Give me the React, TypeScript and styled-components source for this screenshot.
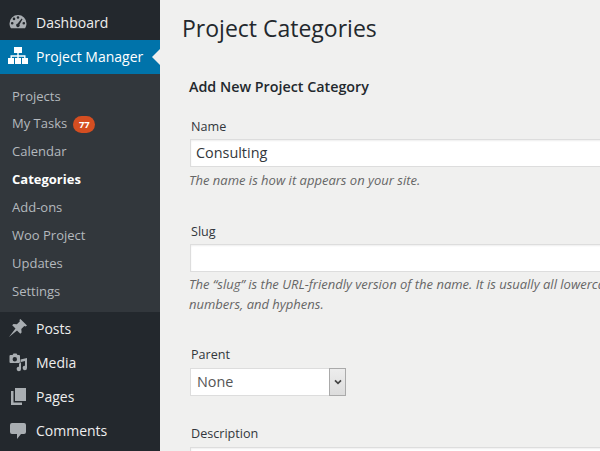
import styled, { createGlobalStyle } from 'styled-components'

const GlobalStyle = createGlobalStyle`
	html, body {
		margin: 0;
		width: 600px;
		height: 451px;
		overflow: hidden;
		background: #f0f0ef;
		font-family: 'Open Sans', sans-serif;
	}
	* {
		box-sizing: border-box;
	}
`

const Page = styled.div`
	width: 600px;
	height: 451px;
	display: flex;
	overflow: hidden;
`

const Sidebar = styled.nav`
	width: 160px;
	flex-shrink: 0;
	padding-top: 6px;
	background: #23282d;
`

const MenuRow = styled.div<{ $active?: boolean }>`
	height: 34px;
	display: flex;
	position: relative;
	align-items: center;
	gap: 8px;
	padding: 0 0 2px 8px;
	font-size: 14px;
	color: ${(p) => (p.$active ? '#fff' : '#eee')};
	background: ${(p) => (p.$active ? '#0073aa' : 'transparent')};
`

const IconSlot = styled.span`
	width: 20px;
	height: 20px;
	display: flex;
	flex-shrink: 0;
	color: #a9aeb2;
`

const ActiveArrow = styled.span`
	position: absolute;
	top: 9px;
	right: 0;
	border: 8px solid transparent;
	border-right-color: #f0f0ef;
	border-left-width: 0;
`

const Submenu = styled.div`
	height: 238px;
	padding-top: 7.6px;
	background: #32373c;
`

const SubItem = styled.div<{ $current?: boolean }>`
	height: 27.86px;
	display: flex;
	align-items: center;
	gap: 6px;
	padding-left: 12px;
	font-size: 13px;
	color: ${(p) => (p.$current ? '#fff' : '#b4b9be')};
	font-weight: ${(p) => (p.$current ? 700 : 400)};
`

const Badge = styled.span`
	width: 22px;
	height: 17px;
	display: flex;
	align-items: center;
	justify-content: center;
	border-radius: 9px;
	margin-top: 3px;
	font-size: 9.5px;
	font-weight: 700;
	letter-spacing: -0.3px;
	color: #fff;
	background: #d54e21;
`

const Content = styled.main`
	width: 440px;
	flex-shrink: 0;
	padding: 12px 0 0 22px;
	color: #23282d;
`

const Title = styled.h1`
	margin: 0 0 32px;
	font-size: 23px;
	line-height: 33px;
	font-weight: 400;
`

const Form = styled.div`
	padding-left: 7px;
`

const Heading = styled.h2`
	margin: 0 0 21px;
	font-size: 14.3px;
	line-height: 20px;
	font-weight: 600;
`

const Field = styled.div<{ $gap: number }>`
	width: 440px;
	margin-bottom: ${(p) => p.$gap}px;
`

const Label = styled.div<{ $gap?: number }>`
	margin: 0 0 ${(p) => p.$gap ?? 4}px 2px;
	font-size: 12.6px;
	line-height: 17px;
	color: #32373c;
`

const TextInput = styled.div`
	height: 28px;
	width: 440px;
	margin-left: 1px;
	padding-left: 5px;
	font-size: 14.4px;
	line-height: 25px;
	color: #32373c;
	background: #fff;
	border: 1px solid #ddd;
	box-shadow: inset 0 1px 2px rgba(0, 0, 0, 0.07);
`

const Hint = styled.p`
	margin: 2.5px 0 0;
	width: 411px;
	font-size: 13px;
	line-height: 20px;
	font-style: italic;
	white-space: nowrap;
	color: #666;
`

const SelectBox = styled.div`
	width: 156px;
	height: 28px;
	display: flex;
	margin-left: 1px;
	background: #fff;
	border: 1px solid #ddd;
`

const SelectValue = styled.div`
	flex: 1;
	padding-left: 6px;
	font-size: 14.4px;
	line-height: 26px;
	color: #555;
`

const SelectButton = styled.div`
	width: 17px;
	display: flex;
	align-items: center;
	justify-content: center;
	color: #444;
	background: linear-gradient(#ededed, #dcdcdc);
	border: 1px solid #aaa;
	margin: -1px -1px -1px 0;
`

const DashboardIcon = () => (
	<svg width="20" height="20" viewBox="0 0 20 20" fill="currentColor">
		<path d="M10 3a8.500 8.500 0 0 0-8.500 8.500c0 1.800.6 3.500 1.500 4.800h14c.9-1.300 1.500-3 1.500-4.800A8.500 8.500 0 0 0 10 3zM6 5.600a1.300 1.300 0 1 1 0 2.600 1.300 1.300 0 0 1 0-2.600zM10 4.200a1.300 1.300 0 1 1 0 2.600 1.300 1.300 0 0 1 0-2.600zM4.200 10a1.300 1.300 0 1 1 0 2.600 1.300 1.300 0 0 1 0-2.600zM15.800 10a1.300 1.300 0 1 1 0 2.600 1.300 1.300 0 0 1 0-2.600zM13.600 6.600l.9.6-3 5.200a1.800 1.800 0 1 1-1.800-.9z" fillRule="evenodd" />
	</svg>
)

const SitemapIcon = () => (
	<svg width="20" height="20" viewBox="0 0 20 20" fill="#fff">
		<path d="M6 1h8v6H6z" />
		<path d="M0 12h6v6H0zM7 12h6v6H7zM14 12h6v6h-6z" />
		<path d="M9.300 7h1.400v2.300h6.800V12h-1.400V10.700h-5.400V12H9.300v-1.300H3.900V12H2.500V9.300h6.800z" />
	</svg>
)

const PinIcon = () => (
	<svg width="20" height="20" viewBox="0 0 20 20" fill="currentColor">
		<path d="M12.400 1l6.600 6.600-1.500 1-1.200-.5-3 3 .3 3.400-1.300 1.300-3.300-3.300L1 19l6.500-8.500-3.300-3.300 1.300-1.300 3.400.3 3-3-.5-1.200z" />
	</svg>
)

const MediaIcon = () => (
	<svg width="20" height="20" viewBox="0 0 20 20" fill="currentColor">
		<path d="M2.500 3h2l1-1.500h3L9.500 3H11a1 1 0 0 1 1 1v6a1 1 0 0 1-1 1H2.500a1 1 0 0 1-1-1V4a1 1 0 0 1 1-1zm4.300 2a2.200 2.200 0 1 0 0 4.400 2.200 2.200 0 0 0 0-4.400z" fillRule="evenodd" />
		<path d="M19 6v10a2.200 2.200 0 1 1-2-2.200V9l-4 1v7a2.200 2.200 0 1 1-2-2.200v-3.300l1.500-.5V7.500z" />
	</svg>
)

const PagesIcon = () => (
	<svg width="20" height="20" viewBox="0 0 20 20" fill="currentColor">
		<path d="M7 2h11v13H7z" />
		<path d="M3 5h2.500v11.500H14V19H3z" />
	</svg>
)

const CommentIcon = () => (
	<svg width="20" height="20" viewBox="0 0 20 20" fill="currentColor">
		<path d="M4 3h12a2 2 0 0 1 2 2v7a2 2 0 0 1-2 2h-3l-4 5v-5H4a2 2 0 0 1-2-2V5a2 2 0 0 1 2-2z" />
	</svg>
)

const ChevronIcon = () => (
	<svg width="8" height="6" viewBox="0 0 9 7" fill="none" stroke="currentColor" strokeWidth="2">
		<path d="M1 1.500l3.500 3.500L8 1.500" />
	</svg>
)

const subItems = ['Projects', 'My Tasks', 'Calendar', 'Categories', 'Add-ons', 'Woo Project', 'Updates', 'Settings']

const mainItems = [
	{ label: 'Posts', icon: <PinIcon /> },
	{ label: 'Media', icon: <MediaIcon /> },
	{ label: 'Pages', icon: <PagesIcon /> },
	{ label: 'Comments', icon: <CommentIcon /> },
]

const App = () => {
	return (
		<Page>
			<GlobalStyle />
			<Sidebar>
				<MenuRow>
					<IconSlot>
						<DashboardIcon />
					</IconSlot>
					Dashboard
				</MenuRow>
				<MenuRow $active>
					<IconSlot>
						<SitemapIcon />
					</IconSlot>
					Project Manager
					<ActiveArrow />
				</MenuRow>
				<Submenu>
					{subItems.map((item) => (
						<SubItem key={item} $current={item === 'Categories'}>
							{item}
							{item === 'My Tasks' && <Badge>77</Badge>}
						</SubItem>
					))}
				</Submenu>
				{mainItems.map((item) => (
					<MenuRow key={item.label}>
						<IconSlot>{item.icon}</IconSlot>
						{item.label}
					</MenuRow>
				))}
			</Sidebar>
			<Content>
				<Title>Project Categories</Title>
				<Form>
					<Heading>Add New Project Category</Heading>
					<Field $gap={33}>
						<Label>Name</Label>
						<TextInput>Consulting</TextInput>
						<Hint>The name is how it appears on your site.</Hint>
					</Field>
					<Field $gap={32}>
						<Label>Slug</Label>
						<TextInput />
						<Hint>
							The “slug” is the URL-friendly version of the name. It is usually all lowercase and contains only letters,
							<br />
							numbers, and hyphens.
						</Hint>
					</Field>
					<Field $gap={29}>
						<Label $gap={5}>Parent</Label>
						<SelectBox>
							<SelectValue>None</SelectValue>
							<SelectButton>
								<ChevronIcon />
							</SelectButton>
						</SelectBox>
					</Field>
					<Field $gap={0}>
						<Label $gap={5}>Description</Label>
						<TextInput />
					</Field>
				</Form>
			</Content>
		</Page>
	)
}

export default App
